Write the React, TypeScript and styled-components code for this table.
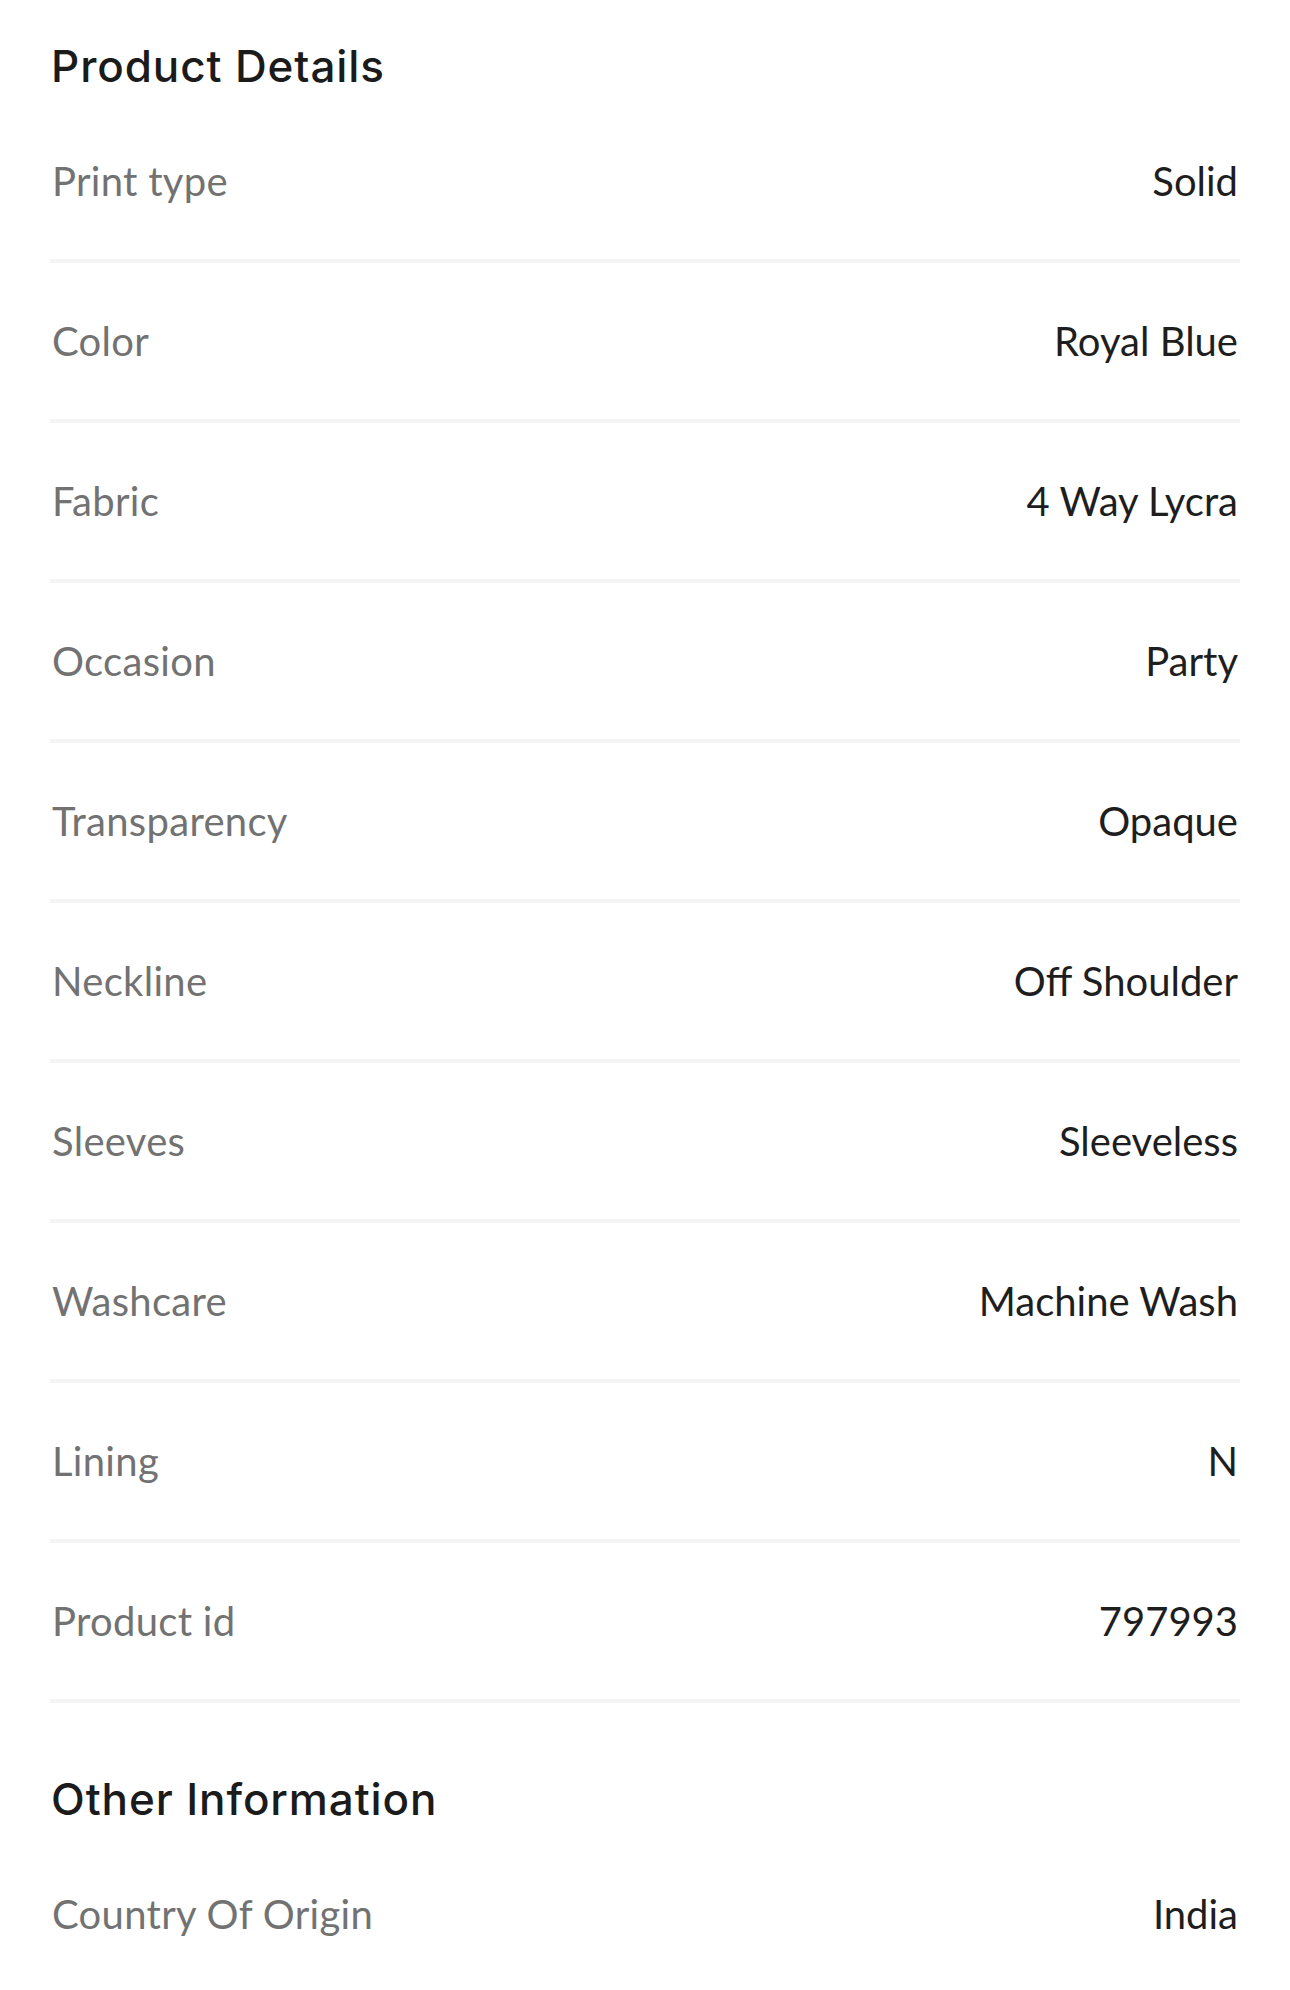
import React from 'react';
import styled, { createGlobalStyle } from 'styled-components';

const GlobalStyle = createGlobalStyle`
  html, body {
    margin: 0;
    padding: 0;
    background: #ffffff;
  }
  body {
    font-family: Lato, "Noto Sans", sans-serif;
    -webkit-font-smoothing: antialiased;
  }
`;

const Page = styled.div`
  padding: 40px 50px 0;
  background: #ffffff;
`;

const Section = styled.section`
  & + & {
    margin-top: 70px;
  }
`;

const Heading = styled.h2`
  margin: 0 0 10px;
  padding-left: 1px;
  font-family: Inter, Lato, sans-serif;
  font-size: 44px;
  line-height: 53px;
  font-weight: 500;
  color: #1b1b1b;
  letter-spacing: 0.9px;
`;

const Row = styled.div`
  display: flex;
  justify-content: space-between;
  align-items: center;
  padding: 54px 0;
  border-bottom: 4px solid #f5f5f5;
  font-size: 40px;
  line-height: 1.2;
`;

const Label = styled.span`
  color: #727272;
  padding-left: 2px;
  letter-spacing: 0.3px;
`;

const Value = styled.span`
  color: #1e1e1e;
  text-align: right;
  padding-right: 2px;
`;

type Detail = { label: string; value: string };

const productDetails: Detail[] = [
  { label: 'Print type', value: 'Solid' },
  { label: 'Color', value: 'Royal Blue' },
  { label: 'Fabric', value: '4 Way Lycra' },
  { label: 'Occasion', value: 'Party' },
  { label: 'Transparency', value: 'Opaque' },
  { label: 'Neckline', value: 'Off Shoulder' },
  { label: 'Sleeves', value: 'Sleeveless' },
  { label: 'Washcare', value: 'Machine Wash' },
  { label: 'Lining', value: 'N' },
  { label: 'Product id', value: '797993' },
];

const otherInfo: Detail[] = [{ label: 'Country Of Origin', value: 'India' }];

const DetailList: React.FC<{ title: string; items: Detail[] }> = ({ title, items }) => (
  <Section>
    <Heading>{title}</Heading>
    {items.map((item) => (
      <Row key={item.label}>
        <Label>{item.label}</Label>
        <Value>{item.value}</Value>
      </Row>
    ))}
  </Section>
);

const App: React.FC = () => {
  return (
    <>
      <GlobalStyle />
      <Page>
        <DetailList title="Product Details" items={productDetails} />
        <DetailList title="Other Information" items={otherInfo} />
      </Page>
    </>
  );
};

export default App;
